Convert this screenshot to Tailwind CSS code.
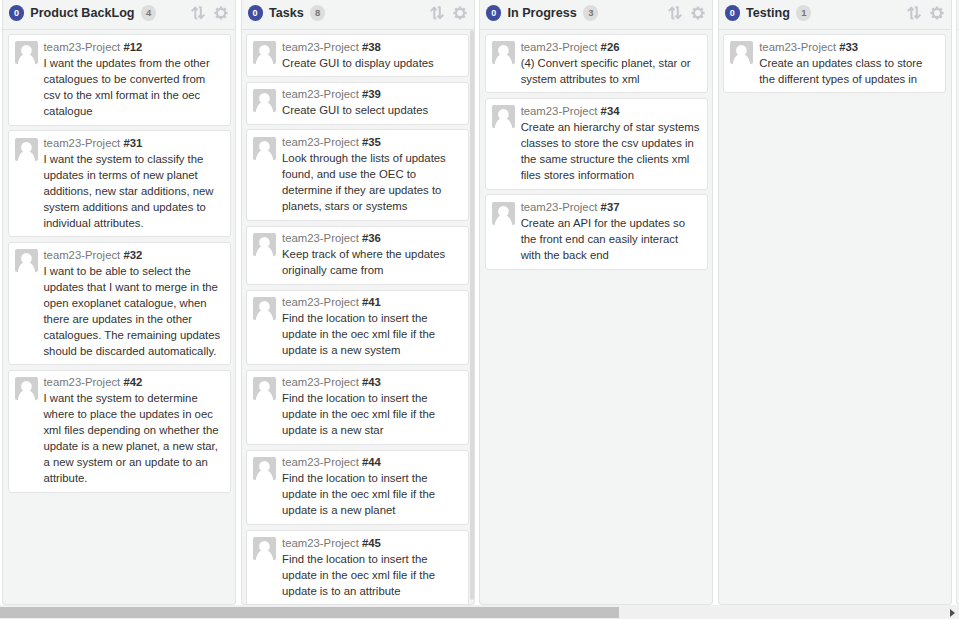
<!DOCTYPE html>
<html lang="en">
<head>
<meta charset="utf-8">
<title>Board</title>
<script src="https://cdn.jsdelivr.net/npm/@tailwindcss/browser@4"></script>
</head>
<body class="bg-white overflow-hidden">
<svg class="hidden">
  <symbol id="avatar" viewBox="0 0 23 23"><rect width="23" height="23" rx="2" fill="#cfcfcf"/><ellipse cx="11.400" cy="9.400" rx="5.300" ry="5.500" fill="#fff"/><path d="M2.700 23C3.300 19 5.600 14.600 8.600 13.600h5.600c3.200 1 5.500 5.400 6.100 9.400z" fill="#fff"/></symbol>
  <symbol id="sort" viewBox="0 0 14 14"><path d="M4.300 12.800V2M.7 5.100 4.200 1.700 6.600 4.100M9.800.6V12M7.400 9.600l2.500 2.500 3.500-3.500M4.300 12.500h2.100M7.800 1.300h2" fill="none" stroke="#c6c8ce" stroke-width="2"/></symbol>
  <symbol id="gear" viewBox="0 0 14 14"><circle cx="7" cy="7" r="4.100" fill="none" stroke="#c6c8ce" stroke-width="2.100"/><path d="M7 .4v2.200M7 11.400v2.200M.4 7h2.200M11.400 7h2.200M2.300 2.300l1.600 1.600M10.100 10.100l1.600 1.600M2.300 11.700l1.600-1.600M10.100 3.900l1.600-1.600" stroke="#c6c8ce" stroke-width="2.500"/></symbol>
</svg>
<div class="flex flex-col w-[959px] h-[619px] overflow-hidden font-['Liberation_Sans',sans-serif]">
  <main id="board" class="flex h-[605px] pl-[2px] gap-[4.6px] overflow-hidden"></main>
  <div class="flex justify-between items-center h-[14px] bg-[#f0f0f0] pt-[2px] pb-px">
    <div class="w-[619px] h-[11px] bg-[#c1c1c1]"></div>
    <svg class="w-[5px] h-[8px] mr-1" viewBox="0 0 5 8"><path d="M0 0 5 4 0 8z" fill="#505050"/></svg>
  </div>
</div>
<script>
const columns = [
  {name:'Product BackLog', count:4, cards:[
    [12,92,4,'I want the updates from the other|catalogues to be converted from|csv to the xml format in the oec|catalogue'],
    [31,107,5,'I want the system to classify the|updates in terms of new planet|additions, new star additions, new|system additions and updates to|individual attributes.',0,3],
    [32,123,5,'I want to be able to select the|updates that I want to merge in the|open exoplanet catalogue, when|there are updates in the other|catalogues. The remaining updates|should be discarded automatically.'],
    [42,123,5,'I want the system to determine|where to place the updates in oec|xml files depending on whether the|update is a new planet, a new star,|a new system or an update to an|attribute.',-1]]},
  {name:'Tasks', count:8, scroll:true, cards:[
    [38,43,5,'Create GUI to display updates'],
    [39,43,4,'Create GUI to select updates',-1],
    [35,92,5,'Look through the lists of updates|found, and use the OEC to|determine if they are updates to|planets, stars or systems',0,3],
    [36,59,5,'Keep track of where the updates|originally came from',-1],
    [41,75,5,'Find the location to insert the|update in the oec xml file if the|update is a new system',-1],
    [43,75,5,'Find the location to insert the|update in the oec xml file if the|update is a new star',-1],
    [44,75,5,'Find the location to insert the|update in the oec xml file if the|update is a new planet',-1],
    [45,92,0,'Find the location to insert the|update in the oec xml file if the|update is to an attribute']]},
  {name:'In Progress', count:3, cards:[
    [26,59,5,'(4) Convert specific planet, star or|system attributes to xml'],
    [34,92,4,'Create an hierarchy of star systems|classes to store the csv updates in|the same structure the clients xml|files stores information'],
    [37,76,0,'Create an API for the updates so|the front end can easily interact|with the back end',0,3]]},
  {name:'Testing', count:1, cards:[
    [33,59,0,'Create an updates class to store|the different types of updates in']]},
  {name:'', count:0, cards:[]}
];
const card = ([id,h,gap,text,shift=0,avatarTop=2]) => `
  <article class="flex shrink-0 w-[223px] rounded-[3px] border border-[#e4e4e4] bg-white pl-[6px] pt-[4px] overflow-hidden" style="height:${h}px;margin-bottom:${gap}px">
    <svg class="w-[23px] h-[23px] mr-[5.850px] shrink-0" style="margin-top:${avatarTop}px"><use href="#avatar"/></svg>
    <div class="text-[11.340px] leading-[16px] text-[#333] whitespace-nowrap" style="margin-top:${shift}px">
      <div class="text-[#777]">team23-Project <b class="text-[#333]">#${id}</b></div>
      ${text.split('|').map(l=>`<div>${l}</div>`).join('')}
    </div>
  </article>`;
const header = c => `
      <span class="w-[15px] h-[16px] rounded-full bg-[#404d9e] text-white text-[9px] leading-[16px] font-bold text-center">0</span>
      <h2 class="ml-[6.300px] text-[12.600px] leading-[16px] font-bold text-[#2b2e31] whitespace-nowrap">${c.name}</h2>
      <span class="ml-[6.500px] w-[15px] h-[16px] rounded-full bg-[#dddddd] text-[#777] text-[9.500px] leading-[16px] font-bold text-center">${c.count}</span>
      <svg class="w-[14px] h-[14px] ml-auto"><use href="#sort"/></svg>
      <svg class="w-[14px] h-[14px] ml-[9px]"><use href="#gear"/></svg>`;
document.getElementById('board').innerHTML = columns.map(c => `
  <section class="relative shrink-0 w-[234px] h-[605px] flex flex-col rounded-b-[4px] border border-t-0 border-[#e2e4e4] bg-[#f3f5f5] overflow-hidden">
    <header class="flex items-center shrink-0 h-[30px] pl-[6px] pr-[7px] pb-[4px] border-b border-[#e2e4e4]">${c.name ? header(c) : ''}</header>
    <div class="flex flex-col pl-[4.600px] pt-[4px]">${c.cards.map(card).join('')}</div>
    ${c.scroll ? '<div class="absolute right-0 top-[30px] w-[4px] h-[570px] rounded-full bg-[#dadada]"></div>' : ''}
  </section>`).join('');
</script>
</body>
</html>
